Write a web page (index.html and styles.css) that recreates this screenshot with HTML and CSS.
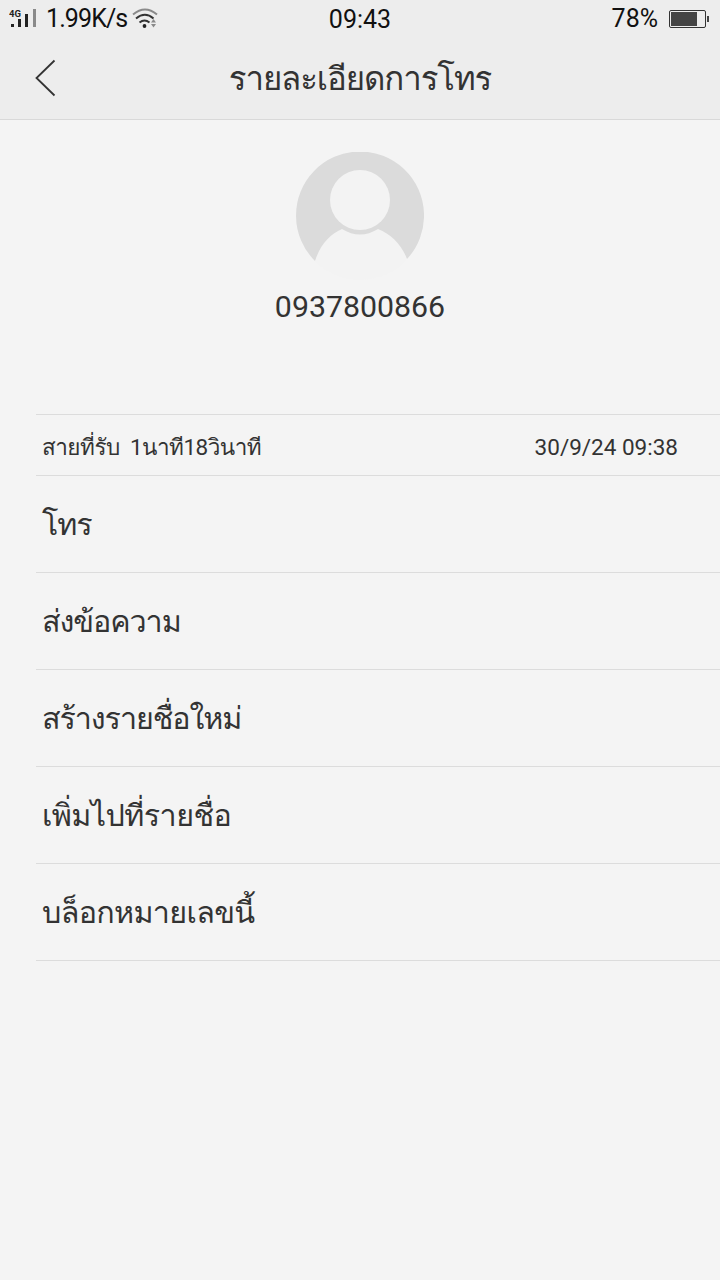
FILE: index.html
```html
<!DOCTYPE html>
<html lang="th">
<head>
<meta charset="utf-8">
<title>รายละเอียดการโทร</title>
<link rel="stylesheet" href="styles.css">
</head>
<body>
<header class="top">
  <div class="status">
    <div class="status-left">
      <svg class="signal" width="30" height="22" viewBox="0 0 30 22">
        <text class="network" x="0" y="9">4G</text>
        <path fill="#222" d="M2 16h3v3H2zM9 11h3v8H9zM16 6h3v13h-3z"/>
        <path fill="#8a8a8a" d="M24 1h3v18h-3z"/>
      </svg>
      <span class="speed">1.99K/s</span>
      <svg class="wifi" width="26" height="22" viewBox="0 0 26 22">
        <g fill="none" stroke-width="2">
          <path stroke="#8a8a8a" d="M1 6.500Q13 -3.500 25 6.500"/>
          <path stroke="#333" d="M4 10.500Q13 3 21.500 10.500M7.500 14.500Q12.500 10.500 17.500 14.500"/>
        </g>
        <circle cx="12.500" cy="18" r="1.900" fill="#222"/>
        <path fill="#8a8a8a" d="M19 14.500l2.500-3.500 2.500 3.500zM19 16h5l-2.500 3.500z"/>
      </svg>
    </div>
    <span class="clock">09:43</span>
    <div class="status-right">
      <span>78%</span>
      <svg class="battery" width="40" height="18" viewBox="0 0 40 18">
        <rect x=".5" y=".5" width="36" height="17" rx="1.500" fill="none" stroke="#333"/>
        <path fill="#444" d="M2 2h26v14H2zM38 6h2v6h-2z"/>
      </svg>
    </div>
  </div>
  <nav class="nav">
    <svg class="back" width="22" height="38" viewBox="0 0 22 38"><path d="M20.500 1.500L2.500 19l18 17.500" fill="none" stroke="#333" stroke-width="1.800"/></svg>
    <h1 class="title">รายละเอียดการโทร</h1>
  </nav>
</header>
<main>
  <section class="contact">
    <svg class="avatar" width="128" height="128" viewBox="0 0 128 128">
      <path fill="#dbdbdb" d="M19 109A64 64 0 1 1 111 107L64 85Z"/>
      <path fill="#f3f3f3" d="M19 109C24 93 34 82 46 77Q64 88 82 77C95 82 106 93 111 107A64 64 0 0 1 64 128A64 64 0 0 1 19 109Z"/>
      <circle cx="64" cy="48" r="30" fill="#f3f3f3"/>
    </svg>
    <div class="number">0937800866</div>
  </section>
  <section class="list">
    <div class="call"><span class="call-kind">สายที่รับ&nbsp; 1นาที18วินาที</span><span class="call-date">30/9/24 09:38</span></div>
    <div class="item"><span class="dial">โทร</span></div>
    <div class="item"><span class="message">ส่งข้อความ</span></div>
    <div class="item"><span class="create">สร้างรายชื่อใหม่</span></div>
    <div class="item"><span class="add">เพิ่มไปที่รายชื่อ</span></div>
    <div class="item"><span class="block">บล็อกหมายเลขนี้</span></div>
  </section>
</main>
</body>
</html>
```
FILE: styles.css
```css
* { box-sizing: border-box; }
body {
  margin: 0;
  min-height: 1280px;
  background: #f4f4f4;
  color: #333;
  font-family: Roboto, Loma, Garuda, sans-serif;
}
.top {
  height: 120px;
  background: #ededed;
  border-bottom: 1px solid #d9d9d9;
}
.status {
  display: grid;
  grid-template-columns: 1fr auto 1fr;
  height: 38px;
  padding: 0 11px 0 9px;
  align-items: center;
  font-size: 25px;
  line-height: 38px;
  color: #111;
}
.status-left, .status-right { display: flex; align-items: center; }
.status-left { margin-top: -1px; }
.status-right { justify-content: flex-end; gap: 11px; margin-top: -2px; }
.signal { margin-right: 7px; }
.network { font: bold 9.500px Roboto, sans-serif; fill: #222; }
.speed { letter-spacing: -.9px; }
.clock { padding: 1px 0 0 2px; }
.wifi { margin-left: 5px; }
.nav {
  display: grid;
  grid-template-columns: 36px 1fr 36px;
  align-items: center;
  height: 80px;
  padding: 0 34px;
}
.title {
  margin: 0;
  padding-top: 2px;
  text-align: center;
  font-size: 33px;
  letter-spacing: -1.100px;
  font-weight: 400;
  line-height: 78px;
  white-space: nowrap;
}
.contact {
  display: flex;
  flex-direction: column;
  align-items: center;
  height: 294px;
  padding-top: 32px;
}
.number { margin-top: 7px; font-size: 30.300px; line-height: 40px; }
.list { margin-left: 36px; border-top: 1px solid #dcdcdc; }
.call {
  display: flex;
  justify-content: space-between;
  height: 61px;
  padding: 0 42px 0 6px;
  border-bottom: 1px solid #dcdcdc;
  font-size: 22.500px;
  line-height: 64px;
}
.call-kind { letter-spacing: -.500px; }
.item {
  height: 97px;
  padding-left: 6px;
  border-bottom: 1px solid #dcdcdc;
  font-size: 30.500px;
  letter-spacing: -1.100px;
  line-height: 98px;
}
.add { letter-spacing: -.600px; }
.block { letter-spacing: -.700px; }
```
